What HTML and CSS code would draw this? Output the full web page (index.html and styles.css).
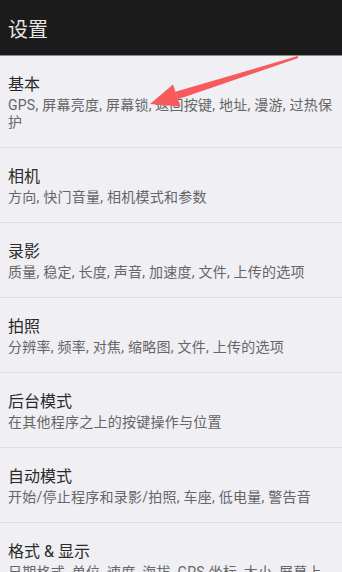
FILE: index.html
```html
<!DOCTYPE html>
<html lang="zh-CN">
<head>
  <meta charset="UTF-8">
  <meta name="viewport" content="width=device-width, initial-scale=1.0">
  <title>设置</title>
  <link rel="stylesheet" href="styles.css">
</head>
<body>
  <div class="screen">
    <header class="toolbar">
      <h1 class="toolbar-title">设置</h1>
    </header>

    <ul class="prefs">
      <li class="pref">
        <div class="pref-title">基本</div>
        <div class="pref-summary">GPS, 屏幕亮度, 屏幕锁, 返回按键, 地址, 漫游, 过热保护</div>
      </li>
      <li class="pref">
        <div class="pref-title">相机</div>
        <div class="pref-summary">方向, 快门音量, 相机模式和参数</div>
      </li>
      <li class="pref">
        <div class="pref-title">录影</div>
        <div class="pref-summary">质量, 稳定, 长度, 声音, 加速度, 文件, 上传的选项</div>
      </li>
      <li class="pref">
        <div class="pref-title">拍照</div>
        <div class="pref-summary">分辨率, 频率, 对焦, 缩略图, 文件, 上传的选项</div>
      </li>
      <li class="pref">
        <div class="pref-title">后台模式</div>
        <div class="pref-summary">在其他程序之上的按键操作与位置</div>
      </li>
      <li class="pref">
        <div class="pref-title">自动模式</div>
        <div class="pref-summary">开始/停止程序和录影/拍照, 车座, 低电量, 警告音</div>
      </li>
      <li class="pref">
        <div class="pref-title">格式 &amp; 显示</div>
        <div class="pref-summary">日期格式, 单位, 速度, 海拔, GPS 坐标, 大小, 屏幕上的位置</div>
      </li>
    </ul>

    <!-- annotation arrow drawn over the list -->
    <svg class="arrow" width="342" height="572" viewBox="0 0 342 572">
      <polygon points="298.3,58 297.7,56 175.4,91.8 178,99.2" fill="#f65a5c"/>
      <polygon points="150,104 173,84.5 180.5,106.5" fill="#f65a5c"/>
    </svg>
  </div>
</body>
</html>
```

FILE: styles.css
```css
* {
  margin: 0;
  padding: 0;
  box-sizing: border-box;
}

html, body {
  width: 342px;
  height: 572px;
  overflow: hidden;
}

body {
  font-family: Roboto, 'Noto Sans CJK SC', sans-serif;
  background-color: #efeff4;
}

.screen {
  position: relative;
  height: 572px;
  overflow: hidden;
}

.toolbar {
  height: 56px;
  background-color: #1b1b1b;
  border-bottom: 1px solid #8e8e8e;
  display: flex;
  align-items: center;
  padding: 2px 8px 0;
}

.toolbar-title {
  font-size: 20px;
  font-weight: normal;
  color: #e6e6e6;
}

.prefs {
  list-style: none;
}

.pref {
  padding: 19px 8px 16px;
  border-bottom: 1px solid #dedde2;
}

.pref-title {
  font-size: 16px;
  line-height: 20px;
  color: #2a2a2a;
}

.pref-summary {
  margin-top: 2px;
  font-size: 14px;
  line-height: 17px;
  letter-spacing: 0.25px;
  color: #666;
}

/* overlay */
.arrow {
  position: absolute;
  left: 0;
  top: 0;
  pointer-events: none;
}
```
